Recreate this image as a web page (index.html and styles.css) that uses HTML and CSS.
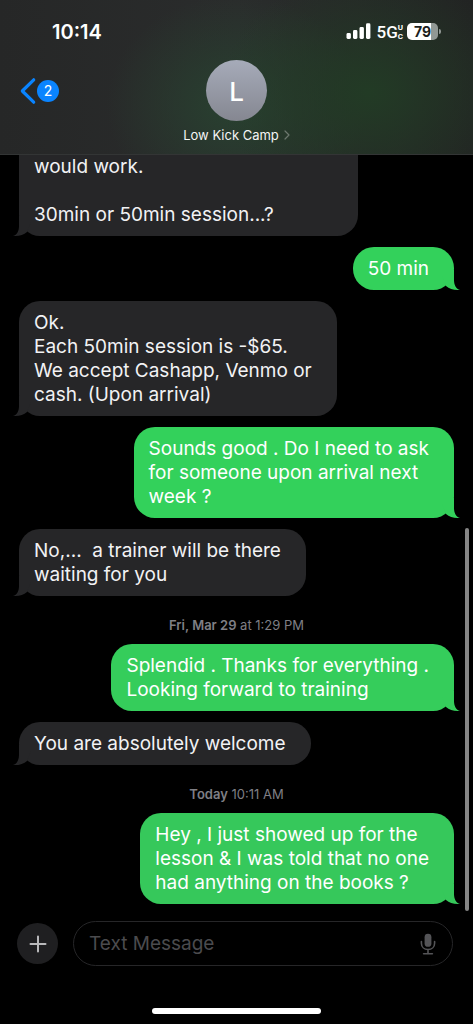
FILE: index.html
```html
<!DOCTYPE html>
<html lang="en">
<head>
<meta charset="utf-8">
<meta name="viewport" content="width=device-width, initial-scale=1">
<title>Low Kick Camp</title>
<link rel="stylesheet" href="styles.css">
</head>
<body>
<div class="screen">
  <header class="header">
    <div class="status">
      <time class="clock">10:14</time>
      <div class="indicators">
        <svg class="signal" width="26" height="17" viewBox="0 0 26 17" fill="#fff" aria-hidden="true">
          <rect x="0.5" y="10" width="4.4" height="6" rx="1.4"/>
          <rect x="7" y="7" width="4.4" height="9" rx="1.4"/>
          <rect x="13.5" y="4" width="4.4" height="12" rx="1.4"/>
          <rect x="20" y="0.3" width="4.4" height="15.7" rx="1.4"/>
        </svg>
        <span class="network">5G<span class="network-uc"><span>U</span><span>C</span></span></span>
        <span class="battery"><span class="battery-level">79</span></span>
      </div>
    </div>
    <div class="nav">
      <a class="back" href="#" aria-label="Back, 2 unread">
        <svg width="16" height="28" viewBox="0 0 16 28" fill="none" stroke="#0a84ff" stroke-width="3.2" stroke-linecap="round" stroke-linejoin="round" aria-hidden="true"><path d="M13.7 2.8 L2.3 14 L13.7 25.2"/></svg>
        <span class="unread">2</span>
      </a>
      <button class="contact" type="button">
        <span class="avatar">L</span>
        <span class="contact-name">Low Kick Camp
          <svg width="6" height="10" viewBox="0 0 6 10" fill="none" stroke="#6d786f" stroke-width="1.2" stroke-linecap="round" stroke-linejoin="round" aria-hidden="true"><path d="M1 1 L5 5 L1 9"/></svg>
        </span>
      </button>
    </div>
  </header>

  <main class="thread">
    <p class="bubble received continued">would work.<br><br>30min or 50min session...?</p>
    <p class="bubble sent">50 min</p>
    <p class="bubble received">Ok.<br>Each 50min session is -$65.<br>We accept Cashapp, Venmo or<br>cash. (Upon arrival)</p>
    <p class="bubble sent">Sounds good . Do I need to ask<br>for someone upon arrival next<br>week ?</p>
    <p class="bubble received">No,...&nbsp; a trainer will be there<br>waiting for you</p>
    <time class="stamp"><b>Fri, Mar 29</b> at 1:29 PM</time>
    <p class="bubble sent middle">Splendid . Thanks for everything .<br>Looking forward to training</p>
    <p class="bubble received">You are absolutely welcome</p>
    <time class="stamp"><b>Today</b> 10:11 AM</time>
    <p class="bubble sent latest">Hey , I just showed up for the<br>lesson &amp; I was told that no one<br>had anything on the books ?</p>
    <span class="scrollbar" aria-hidden="true"></span>
  </main>

  <footer class="footer">
    <form class="composer">
      <button class="add" type="button" aria-label="Add attachment">
        <svg width="18" height="18" viewBox="0 0 18 18" stroke="#b9b9bb" stroke-width="2" stroke-linecap="round" aria-hidden="true"><path d="M9 1.5 V16.5 M1.5 9 H16.5"/></svg>
      </button>
      <div class="field">
        <input class="message" type="text" placeholder="Text Message" aria-label="Text Message">
        <button class="mic" type="button" aria-label="Dictate">
          <svg width="16" height="22" viewBox="0 0 16 22" fill="none" stroke="#545457" stroke-width="1.6" stroke-linecap="round" aria-hidden="true">
            <rect x="4.6" y="0.8" width="6.8" height="13" rx="3.4" fill="#545457" stroke="none"/>
            <path d="M1.4 8.6 V10.2 C1.4 14 4.2 16.5 8 16.5 C11.8 16.5 14.6 14 14.6 10.2 V8.6 M8 16.5 V20.5 M3.6 20.7 H12.4"/>
          </svg>
        </button>
      </div>
    </form>
    <div class="home-bar"></div>
  </footer>
</div>
</body>
</html>
```
FILE: styles.css
```css
* {
  box-sizing: border-box;
}

body {
  margin: 0;
  background: #000;
  color: #f2f2f4;
  font-family: Inter, "Liberation Sans", sans-serif;
}

button,
input {
  margin: 0;
  padding: 0;
  border: 0;
  background: none;
  color: inherit;
  font: inherit;
}

button {
  cursor: pointer;
}

svg {
  display: block;
  flex: none;
}

.screen {
  display: flex;
  flex-direction: column;
  min-height: 100vh;
}

/* Header */

.header {
  padding-bottom: 11px;
  border-bottom: 1px solid #333535;
  background:
    radial-gradient(ellipse 150px 120px at 78% 60%, #223b25 0%, rgba(34, 59, 37, 0) 100%),
    radial-gradient(ellipse 130px 110px at 50% 68%, #284130 0%, rgba(40, 65, 48, 0) 100%),
    linear-gradient(90deg, #262727 0%, #2a2c2c 50%, #222423 100%);
}

.status {
  display: flex;
  align-items: center;
  justify-content: space-between;
  height: 60px;
  padding: 3px 35px 0 52px;
}

.clock {
  color: #fff;
  font-size: 20px;
  font-weight: 600;
}

.indicators {
  display: flex;
  align-items: center;
  gap: 4px;
}

.network {
  display: flex;
  align-items: center;
  color: #fff;
  font-family: Roboto, sans-serif;
  font-size: 17px;
  font-weight: 500;
  line-height: 18px;
}

.network-uc {
  display: flex;
  flex-direction: column;
  font-size: 8px;
  font-weight: 700;
  line-height: 9px;
}

.battery {
  display: flex;
  position: relative;
  width: 31px;
  height: 17px;
  border-radius: 5px;
  background: linear-gradient(90deg, #fff 79%, #919894 79%);
}

.battery::after {
  content: "";
  position: absolute;
  top: 6px;
  right: -3px;
  width: 2px;
  height: 5px;
  border-radius: 0 2px 2px 0;
  background: #919894;
}

.battery-level {
  flex: 1;
  color: #1c1f1d;
  font-size: 14px;
  font-weight: 700;
  line-height: 17px;
  text-align: center;
}

.nav {
  display: grid;
  grid-template-columns: 1fr auto 1fr;
  padding: 0 20px;
}

.back {
  display: flex;
  align-items: center;
  gap: 1px;
  height: 62px;
  text-decoration: none;
}

.unread {
  width: 22px;
  height: 22px;
  border-radius: 50%;
  background: #0a84ff;
  color: #fff;
  font-size: 14px;
  line-height: 22px;
  text-align: center;
}

.contact {
  display: flex;
  flex-direction: column;
  align-items: center;
  gap: 6px;
}

.avatar {
  width: 61px;
  height: 61px;
  border-radius: 50%;
  background: linear-gradient(#a6abb9, #858791);
  color: #fff;
  font-size: 26px;
  font-weight: 500;
  line-height: 63px;
  text-align: center;
}

.contact-name {
  display: flex;
  align-items: center;
  gap: 5px;
  color: #f4f5f4;
  font-size: 13px;
  line-height: 16px;
}

/* Conversation */

.thread {
  display: flex;
  flex: 1;
  flex-direction: column;
  gap: 11px;
  position: relative;
  padding: 0 19px 17px;
}

.bubble {
  position: relative;
  margin: 0;
  padding: 10px 25px 9px 15px;
  border-radius: 21px;
  font-size: 19px;
  line-height: 24px;
  white-space: nowrap;
}

.bubble::after {
  content: "";
  position: absolute;
  bottom: 0;
  width: 18px;
  height: 20px;
  background: inherit;
  clip-path: path("M6 0 V10 C6 15 4 19 0 20 C6 20.5 10.5 19 14 16 L18 6 L18 0 Z");
}

.received {
  align-self: flex-start;
  background: #262628;
}

.received::after {
  left: -6px;
}

.sent {
  align-self: flex-end;
  background: #33d15b;
  color: #fff;
}

.sent::after {
  right: -6px;
  transform: scaleX(-1);
}

.middle {
  background: #35cd5b;
}

.latest {
  background: #36c85b;
}

.continued {
  width: 78%;
  padding-top: 0;
  border-radius: 0 0 21px 21px;
}

.stamp {
  align-self: center;
  padding-top: 10px;
  color: #7f7f85;
  font-size: 13px;
  line-height: 16px;
}

.stamp b {
  font-weight: 600;
}

.scrollbar {
  position: absolute;
  right: 4px;
  bottom: 10px;
  width: 4px;
  height: 50%;
  border-radius: 2px;
  background: #858585;
}

/* Composer */

.footer {
  display: flex;
  flex-direction: column;
  align-items: center;
  gap: 42px;
  padding-bottom: 10px;
}

.composer {
  display: flex;
  align-items: center;
  gap: 15px;
  width: 100%;
  padding: 0 20px 0 17px;
}

.add {
  display: flex;
  flex: none;
  align-items: center;
  justify-content: center;
  width: 41px;
  height: 41px;
  border-radius: 50%;
  background: #1f1f21;
}

.field {
  display: flex;
  flex: 1;
  align-items: center;
  height: 45px;
  padding: 0 16px 0 15px;
  border: 1px solid #262628;
  border-radius: 23px;
}

.message {
  flex: 1;
  min-width: 0;
  height: 24px;
  outline: 0;
  font-size: 19px;
}

.message::placeholder {
  color: #4b4b4e;
  opacity: 1;
}

.home-bar {
  width: 169px;
  height: 6px;
  border-radius: 3px;
  background: #fff;
}
```
